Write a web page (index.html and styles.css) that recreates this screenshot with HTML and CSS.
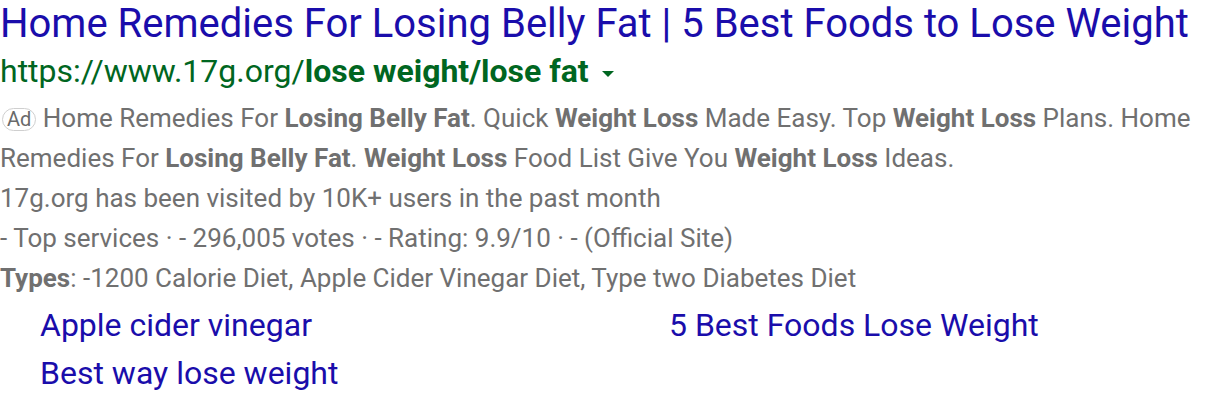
FILE: index.html
```html
<!DOCTYPE html>
<html>
<head>
<meta charset="utf-8">
<link rel="stylesheet" href="styles.css">
</head>
<body>
<div class="ad">
  <h3 class="title">Home Remedies For Losing Belly Fat | 5 Best Foods to Lose Weight</h3>
  <div class="url">https://www.17g.org/<b>lose weight/lose fat</b><span class="caret"></span></div>
  <div class="desc"><span class="badge">Ad</span> Home Remedies For <b>Losing Belly Fat</b>. Quick <b>Weight Loss</b> Made Easy. Top <b>Weight Loss</b> Plans. Home Remedies For <b>Losing Belly Fat</b>. <b>Weight Loss</b> Food List Give You <b>Weight Loss</b> Ideas.</div>
  <div class="desc">17g.org has been visited by 10K+ users in the past month</div>
  <div class="desc">- Top services · - 296,005 votes · - Rating: 9.9/10 · - (Official Site)</div>
  <div class="desc"><b>Types</b>: -1200 Calorie Diet, Apple Cider Vinegar Diet, Type two Diabetes Diet</div>
  <div class="links">
    <a class="link">Apple cider vinegar</a>
    <a class="link">5 Best Foods Lose Weight</a>
    <a class="link">Best way lose weight</a>
  </div>
</div>
</body>
</html>
```
FILE: styles.css
```css
html, body {
  margin: 0;
  padding: 0;
  background: #fff;
}
body {
  font-family: Roboto, "Noto Sans", sans-serif;
}
.title {
  margin: 0;
  font-weight: 400;
  font-size: 40px;
  line-height: 47px;
  color: #1a0dab;
  white-space: nowrap;
}
.url {
  font-size: 32px;
  line-height: 48px;
  margin-bottom: 3px;
  color: #006621;
  display: flex;
  align-items: center;
  white-space: pre;
}
.url b {
  font-weight: 700;
}
.caret {
  width: 0;
  height: 0;
  border-left: 6.5px solid transparent;
  border-right: 6.5px solid transparent;
  border-top: 6px solid #006621;
  margin-left: 13px;
  margin-top: 6px;
}
.desc {
  font-size: 26px;
  line-height: 40px;
  color: #707070;
}
.desc b {
  font-weight: 700;
}
.badge {
  display: inline-block;
  font-size: 20px;
  line-height: 21px;
  padding: 0 4px;
  border: 1px solid #cfcfcf;
  border-radius: 12px;
  color: #6a6a6a;
  margin-left: 2px;
  vertical-align: 1px;
}
.links {
  display: grid;
  grid-template-columns: 629px auto;
  padding-left: 40px;
  padding-top: 3px;
}
.link {
  font-size: 32px;
  line-height: 48px;
  color: #1a0dab;
}
```
